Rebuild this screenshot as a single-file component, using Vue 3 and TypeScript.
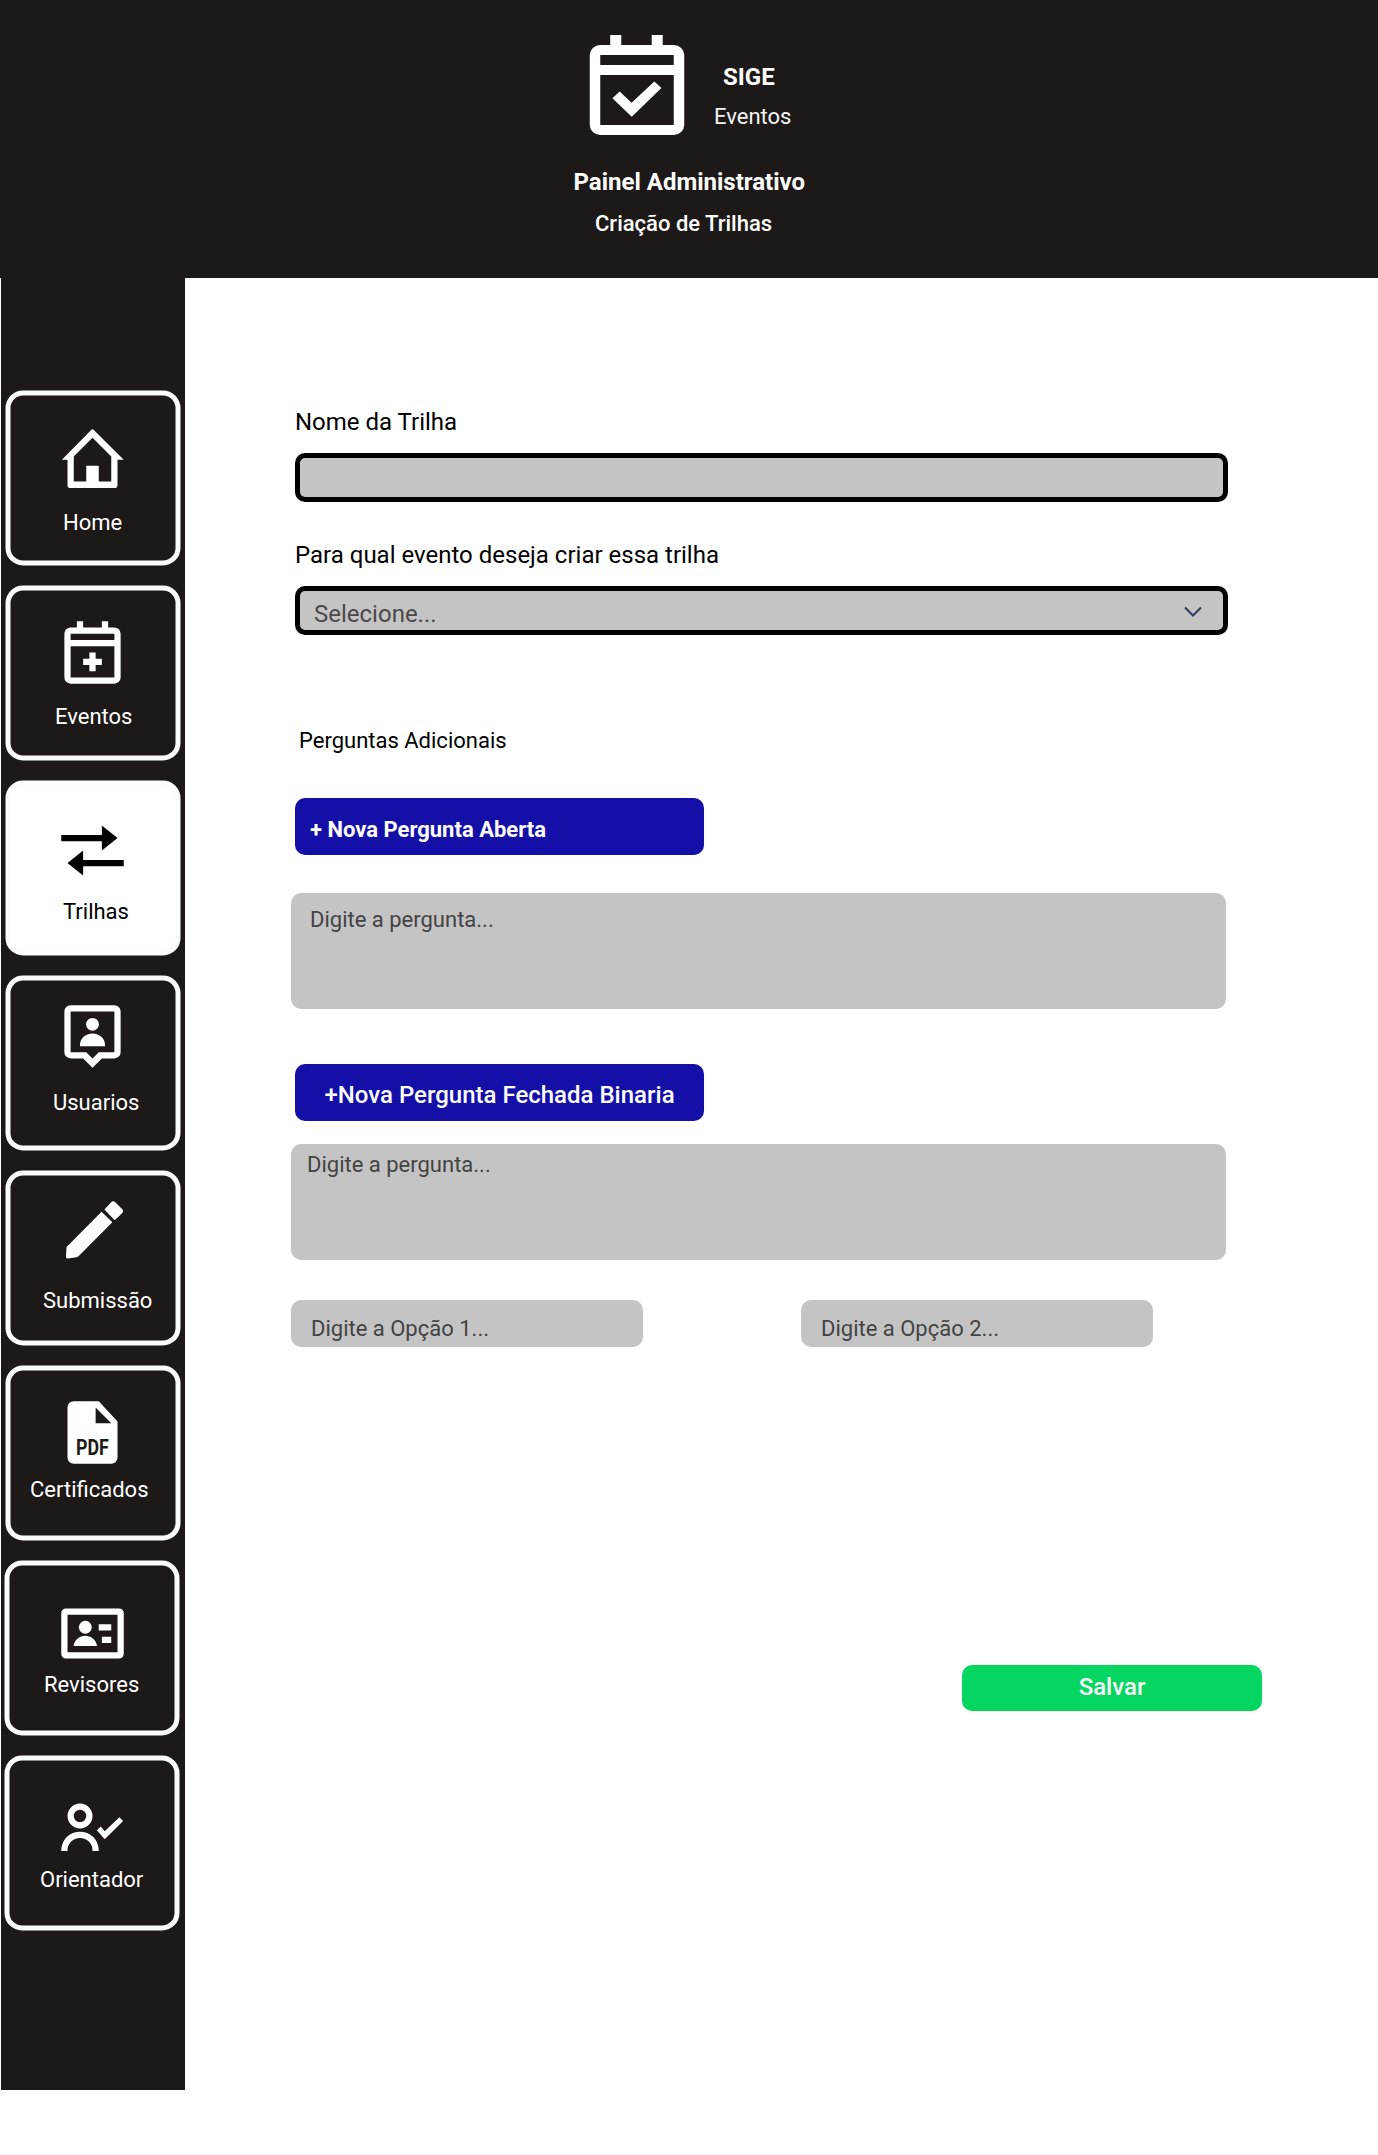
<script setup lang="ts">
import { ref } from 'vue'

interface NavItem {
  id: string
  label: string
}

const items: NavItem[] = [
  { id: 'home', label: 'Home' },
  { id: 'eventos', label: 'Eventos' },
  { id: 'trilhas', label: 'Trilhas' },
  { id: 'usuarios', label: 'Usuarios' },
  { id: 'submissao', label: 'Submissão' },
  { id: 'certificados', label: 'Certificados' },
  { id: 'revisores', label: 'Revisores' },
  { id: 'orientador', label: 'Orientador' },
]

const active = ref('trilhas')
</script>

<template>
  <div class="page">
    <header class="header">
      <div class="brand">
        <svg class="logo" viewBox="0 0 24 24" preserveAspectRatio="none" fill="currentColor">
          <path fill-rule="evenodd" d="M19 3h-2.1V1h-2.1v2H9V1H6.900v2H5a2 2 0 0 0-2 2v14a2 2 0 0 0 2 2h14a2 2 0 0 0 2-2V5a2 2 0 0 0-2-2zM19 19H5V9h14zM19 7H5V5h14z" />
          <path d="M15.3 10.3l1.35 1.3L11 17.35 7.32 13.65 8.7 12.3l2.27 2.25z" />
        </svg>
        <div class="brand-text">
          <strong class="brand-name">SIGE</strong>
          <span class="brand-sub">Eventos</span>
        </div>
      </div>
      <h1 class="title">Painel Administrativo</h1>
      <h2 class="subtitle">Criação de Trilhas</h2>
    </header>

    <div class="body">
      <nav class="sidebar">
        <a
          v-for="item in items"
          :key="item.id"
          class="card"
          :class="[item.id, { active: item.id === active }]"
          @click="active = item.id"
        >
          <svg class="icon" viewBox="0 0 24 24" fill="currentColor">
            <path v-if="item.id === 'home'" fill-rule="evenodd" d="M11.5 2.6Q12 2.1 12.5 2.6L22 12.05H20v8.15a.9.9 0 0 1-.9.9H4.9a.9.9 0 0 1-.9-.9V12.05H2.2zM12 5l-6 6v8h4v-5h4v5h4v-8z" />
            <path v-else-if="item.id === 'eventos'" fill-rule="evenodd" d="M19 3h-2V1h-2v2H9V1H7v2H5a2 2 0 0 0-2 2v14a2 2 0 0 0 2 2h14a2 2 0 0 0 2-2V5a2 2 0 0 0-2-2zM19 19H5V9h14zM19 7H5V5h14zM11 11h2v2h2v2h-2v2h-2v-2H9v-2h2z" />
            <path v-else-if="item.id === 'trilhas'" d="M2 7h13V4l5 4-5 4V9H2zM22 17H9v3l-5-4 5-4v3h13z" />
            <g v-else-if="item.id === 'usuarios'">
              <path fill-rule="evenodd" d="M5 2h14a2 2 0 0 1 2 2v13a2 2 0 0 1-2 2h-4l-3 3-3-3H5a2 2 0 0 1-2-2V4a2 2 0 0 1 2-2zM5 4v13h5l2 2 2-2h5V4z" />
              <circle cx="12" cy="8.1" r="2.05" />
              <path d="M8 15.1v-.5c0-2 1.8-3.6 4-3.6s4 1.6 4 3.6v.5z" />
            </g>
            <g v-else-if="item.id === 'submissao'" transform="translate(0 .16)">
              <path d="M14.9 6.15l3.45 3.4L7.6 20.35q-.3.35-.7.4l-2.7.35q-.75.1-.7-.7l.2-3z" />
              <path d="M15.8 5.4l2.1-2.2q.66-.8 1.4-.1l2.15 2.15q.66.7 0 1.4L19.1 8.85z" />
            </g>
            <g v-else-if="item.id === 'certificados'">
              <path fill-rule="evenodd" d="M6 2h8l6 6.5V20a2 2 0 0 1-2 2H6a2 2 0 0 1-2-2V4a2 2 0 0 1 2-2zM13 4v5h5z" />
              <text class="pdf" x="6.7" y="19.05" textLength="10.5" lengthAdjust="spacingAndGlyphs">PDF</text>
            </g>
            <g v-else-if="item.id === 'revisores'">
              <path fill-rule="evenodd" d="M3.5 4h17A1.5 1.5 0 0 1 22 5.5v13a1.5 1.5 0 0 1-1.5 1.5h-17A1.5 1.5 0 0 1 2 18.5v-13A1.5 1.5 0 0 1 3.5 4zM4 6v12h16V6z" />
              <circle cx="9.7" cy="10" r="2.05" />
              <path d="M6 16v-.3c.3-1.7 1.9-3 3.7-3s3.4 1.3 3.7 3v.3zM14 9h4v2h-4zM15 13h3v2h-3z" />
            </g>
            <g v-else>
              <path fill-rule="evenodd" d="M8 4a4 4 0 1 1 0 8 4 4 0 0 1 0-8zM8 6a2 2 0 1 0 0 4 2 2 0 0 0 0-4z" />
              <path d="M2 19.2V19a6 6 0 0 1 12 0v.2h-2V19a4 4 0 0 0-8 0v.2z" />
              <path d="M20.6 8.4l1.2 1.2-5.9 5.85-2.5-2.85 1.25-1.25 1.25 1.55z" />
            </g>
          </svg>
          <span class="card-label">{{ item.label }}</span>
        </a>
      </nav>

      <main class="form">
        <label class="field-label">Nome da Trilha</label>
        <div class="input"></div>

        <label class="field-label second">Para qual evento deseja criar essa trilha</label>
        <div class="input select">
          <span class="select-text">Selecione...</span>
          <svg class="chevron" viewBox="0 0 20 12" fill="none" stroke="#2e3a5f" stroke-width="2">
            <path d="M2 1.5l8 8 8-8" />
          </svg>
        </div>

        <h3 class="section">Perguntas Adicionais</h3>

        <button class="btn open" type="button">+ Nova Pergunta Aberta</button>
        <div class="area first">Digite a pergunta...</div>

        <button class="btn binary" type="button">+Nova Pergunta Fechada Binaria</button>
        <div class="area other">Digite a pergunta...</div>

        <div class="options">
          <div class="option">Digite a Opção 1...</div>
          <div class="option">Digite a Opção 2...</div>
        </div>

        <button class="save" type="button">Salvar</button>
      </main>
    </div>
  </div>
</template>

<style>
body {
  margin: 0;
  background: #fff;
}
</style>

<style scoped>
.page {
  width: 1378px;
  height: 2155px;
  overflow: hidden;
  background: #fff;
  color: #000;
  font-family: Roboto, sans-serif;
  font-size: 22px;
  line-height: 26px;
}

.header {
  box-sizing: border-box;
  height: 278px;
  padding-top: 30px;
  background: #1d1918;
  color: #fff;
}

.brand {
  display: flex;
  margin-left: 574px;
}

.logo {
  display: block;
  flex: none;
  width: 126px;
  height: 120px;
}

.brand-text {
  display: flex;
  flex-direction: column;
  margin-left: 14px;
  padding-top: 33px;
}

.brand-name {
  margin-left: 9px;
  font-size: 24px;
  font-weight: 700;
  line-height: 28px;
}

.brand-sub {
  margin-top: 13px;
  color: #f3f3f3;
}

.title {
  margin: 18px 0 0 573.5px;
  font-size: 24px;
  font-weight: 700;
  line-height: 28px;
}

.subtitle {
  margin: 15px 0 0 595px;
  font-size: 22px;
  font-weight: 500;
  line-height: 26px;
}

.body {
  display: flex;
}

.sidebar {
  box-sizing: border-box;
  display: flex;
  flex: none;
  flex-direction: column;
  gap: 20px;
  width: 184px;
  height: 1812px;
  margin-left: 1px;
  padding: 112px 0 0 4px;
  background: #1d1918;
}

.card {
  position: relative;
  display: flex;
  flex: none;
  flex-direction: column;
  align-items: flex-start;
  width: 175px;
  height: 175px;
  color: #fff;
}

.card::before {
  position: absolute;
  box-sizing: border-box;
  inset: 0;
  border: 5px solid #fbfbfb;
  border-radius: 17.5px;
  content: '';
  transform: translate(0.5px, 0.5px);
}

.card.active {
  color: #000;
}

.card.active::before {
  background: #fff;
  border-color: #fdfdfd;
}

.icon {
  position: relative;
  display: block;
  flex: none;
  width: 75px;
  height: 75px;
  margin-left: 50px;
}

.pdf {
  fill: #1d1918;
  font-size: 6.8px;
  font-weight: 700;
}

.card-label {
  position: relative;
  white-space: nowrap;
}

.home .icon { margin-top: 32px; }
.home .card-label { margin: 13px 0 0 58px; }
.eventos .icon { margin-top: 33px; }
.eventos .card-label { margin: 11px 0 0 50px; }
.trilhas .icon { margin-top: 33px; }
.trilhas .card-label { margin: 11px 0 0 58px; }
.usuarios .icon { margin-top: 24px; }
.usuarios .card-label { margin: 16px 0 0 48px; }
.submissao .icon { margin-top: 22px; }
.submissao .card-label { margin: 21px 0 0 38px; }
.certificados .icon { margin-top: 30px; }
.certificados .card-label { margin: 7px 0 0 25px; }
.revisores,
.orientador { margin-left: -1px; }
.revisores .icon,
.orientador .icon { margin: 36px 0 0 51px; }
.revisores .card-label { margin: 1px 0 0 40px; }
.orientador .card-label { margin: 1px 0 0 36px; }

.form {
  display: flex;
  flex: 1;
  flex-direction: column;
  align-items: flex-start;
  padding: 130px 0 0 106px;
}

.field-label {
  margin-left: 4px;
  font-size: 24px;
  line-height: 28px;
}

.field-label.second {
  margin-top: 39px;
}

.input {
  box-sizing: border-box;
  width: 933px;
  height: 49px;
  margin: 17px 0 0 4px;
  border: 5px solid #000;
  border-radius: 10px;
  background: #c4c4c4;
}

.select {
  display: flex;
  justify-content: space-between;
  padding: 9px 20px 0 14px;
}

.select-text {
  color: #4b4949;
  font-size: 24px;
  line-height: 28px;
}

.chevron {
  width: 20px;
  height: 12px;
  margin-top: 6px;
}

.section {
  margin: 93px 0 0 8px;
  font-size: 22px;
  font-weight: 400;
  line-height: 26px;
}

.btn {
  box-sizing: border-box;
  width: 409px;
  height: 57px;
  margin-left: 4px;
  border: 0;
  border-radius: 10px;
  background: #140fa7;
  color: #fff;
  font-family: inherit;
  text-align: left;
}

.open {
  margin-top: 44px;
  padding: 19px 0 12px 15px;
  font-size: 22px;
  font-weight: 700;
  line-height: 26px;
}

.binary {
  margin-top: 55px;
  padding: 17px 0 12px 29.5px;
  font-size: 24px;
  font-weight: 500;
  line-height: 28px;
}

.area {
  box-sizing: border-box;
  width: 935px;
  height: 116px;
  border-radius: 10px;
  background: #c4c4c4;
  color: #434343;
}

.first {
  margin-top: 38px;
  padding: 14px 19px;
}

.other {
  margin-top: 23px;
  padding: 8px 16px;
}

.options {
  display: flex;
  gap: 158px;
  margin-top: 40px;
}

.option {
  box-sizing: border-box;
  width: 352px;
  height: 47px;
  padding: 16px 0 0 20px;
  border-radius: 10px;
  background: #c4c4c4;
  color: #434343;
}

.save {
  width: 300px;
  height: 46px;
  margin: 318px 0 0 671px;
  padding: 8px 0 10px;
  border: 0;
  border-radius: 10px;
  background: #05d662;
  color: #f6f6f6;
  font-family: inherit;
  font-size: 24px;
  font-weight: 500;
  line-height: 28px;
  text-align: center;
}
</style>
